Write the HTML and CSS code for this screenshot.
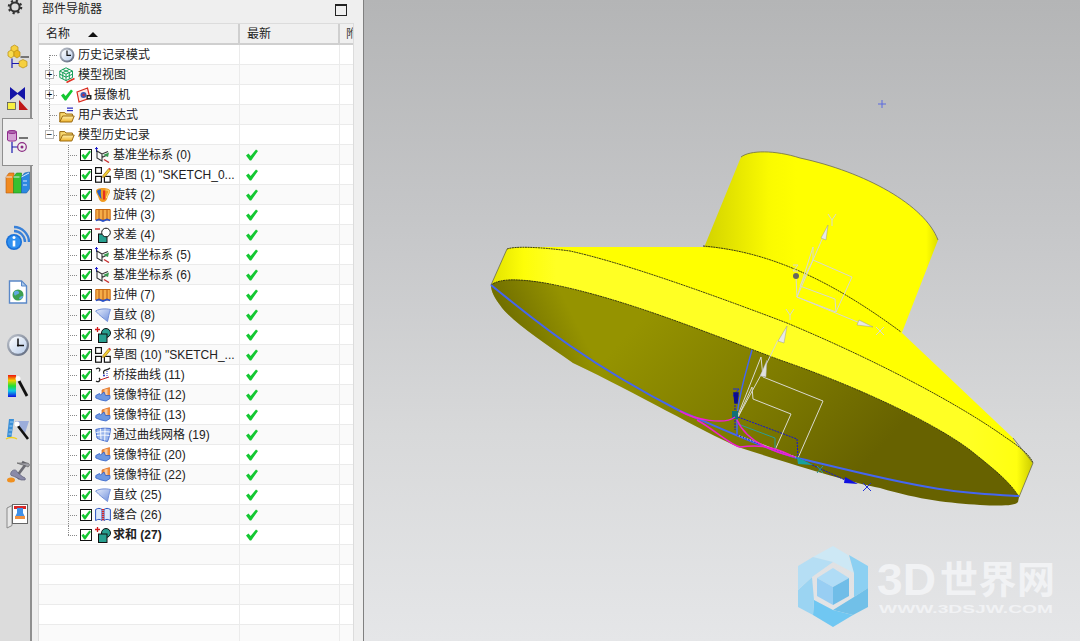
FILE: index.html
```html
<!DOCTYPE html>
<html lang="zh">
<head>
<meta charset="utf-8">
<title>部件导航器</title>
<link rel="stylesheet" href="styles.css">
</head>
<body>
<svg class="defs" width="0" height="0" aria-hidden="true">
  <defs>
    <linearGradient id="g-face" x1="0" y1="0" x2="1" y2="1"><stop offset="0" stop-color="#fff"/><stop offset="1" stop-color="#b9cdea"/></linearGradient>
    <linearGradient id="g-ring" x1="0" y1="0" x2="1" y2="1"><stop offset="0" stop-color="#c3c8d0"/><stop offset="1" stop-color="#59647a"/></linearGradient>
    <linearGradient id="g-fold" x1="0" y1="0" x2="0" y2="1"><stop offset="0" stop-color="#fff2b0"/><stop offset="1" stop-color="#eeb028"/></linearGradient>
    <linearGradient id="g-rain" x1="0" y1="0" x2="0" y2="1"><stop offset="0" stop-color="#f01010"/><stop offset=".25" stop-color="#f0d000"/><stop offset=".5" stop-color="#20e030"/><stop offset=".72" stop-color="#10c8e8"/><stop offset="1" stop-color="#1010e0"/></linearGradient>
    <linearGradient id="g-ruled" x1="0" y1="0" x2="1" y2="1"><stop offset="0" stop-color="#e6edfb"/><stop offset="1" stop-color="#6f8fdc"/></linearGradient>
    <symbol id="i-check" viewBox="0 0 12 12"><polygon points="0,6.5 2.5,4.5 4.6,7 10,0.5 12,2 5.2,11.5 3.8,11.5" fill="#14c832"/></symbol>
    <symbol id="i-box" viewBox="0 0 12 12"><rect x=".5" y=".5" width="11" height="11" fill="#fff" stroke="#111"/><polygon points="1.5,6.5 3.4,4.8 5,6.8 9.4,1.5 11,2.8 5.4,10.6 4.2,10.6" fill="#14c832"/></symbol>
    <symbol id="i-clock" viewBox="0 0 16 16"><circle cx="8" cy="8" r="7.5" fill="url(#g-ring)"/><circle cx="8" cy="8" r="5.6" fill="url(#g-face)"/><path d="M8 3.5V8.4H12" fill="none" stroke="#111" stroke-width="1.2"/></symbol>
    <symbol id="i-views" viewBox="0 0 16 16"><path d="M7 .8 13.5 4v6.5L7 13.6.8 10.5V4ZM.8 4 7 7.2 13.5 4M7 7.2v6.4M3.8 2.4 10.3 5.6v6.4M10.3 2.4 3.8 5.6v6.4M.8 7.2l6.2 3 6.500-3" fill="none" stroke="#19a05a" stroke-width="1"/><path d="M7.5 15.5 15.5 11.5" stroke="#e03020" stroke-width="1.6"/></symbol>
    <symbol id="i-camera" viewBox="0 0 16 16"><path d="M1 5 11.500 1 14 11 3 15Z" fill="#ffe6e0" stroke="#d8281c" stroke-width="1.2"/><circle cx="7.5" cy="8" r="3" fill="#3a58b8"/><circle cx="7.5" cy="8" r="1.2" fill="#c02840"/><rect x="10.500" y="8" width="5" height="4.500" fill="#222"/><rect x="11.900" y="9.400" width="2" height="1.600" fill="#fff"/></symbol>
    <symbol id="i-folder" viewBox="0 0 16 16"><path d="M.8 14V4.6h5l1.2 1.4h6.4V8" fill="#f8d870" stroke="#9a6a10"/><path d="M.8 14 3.6 8h11.6l-2.4 6Z" fill="url(#g-fold)" stroke="#9a6a10"/></symbol>
    <symbol id="i-exprs" viewBox="0 0 16 16"><path d="M.8 15V5.6h5l1.2 1.4h6.4v2" fill="#f8d870" stroke="#9a6a10"/><path d="M.8 15 3.6 9h11.6l-2.4 6Z" fill="url(#g-fold)" stroke="#9a6a10"/><path d="M8 1.2h6M8 3.6h6" stroke="#2a2ac0" stroke-width="1.2"/></symbol>
    <symbol id="i-datum" viewBox="0 0 16 16"><path d="M1.5 0v5M0 1.6h3" stroke="#1a1ac8"/><path d="M2 4v7l5 3V7ZM2 4l5 3 6-2.500M7 10.500l5-2.500" fill="none" stroke="#333" stroke-width="1.100"/><polygon points="8,8 14,5.500 13,10" fill="#3a9a50"/><path d="M9 12.500l5 3" stroke="#c83030" stroke-width="1.400"/></symbol>
    <symbol id="i-sketch" viewBox="0 0 16 16"><rect x=".6" y=".6" width="5.800" height="5.800" fill="#fff" stroke="#111" stroke-width="1.200"/><rect x=".6" y="9.400" width="5.800" height="5.800" fill="#fff" stroke="#111" stroke-width="1.200"/><rect x="9.400" y="9.400" width="5.800" height="5.800" fill="#fff" stroke="#111" stroke-width="1.200"/><path d="M8 8.400 13.500 1.800l1.800 1.400-5.400 6.600-2.300.6Z" fill="#f4d030" stroke="#a07010" stroke-width=".7"/><path d="M13.500 1.800l1.800 1.400.7-1-1.700-1.400Z" fill="#e03030"/></symbol>
    <symbol id="i-revolve" viewBox="0 0 16 16"><path d="M1 4C1 2 4 1 8 1s7 1 7 3c0 3-2 4-2.600 7-.4 2-2 4-4.400 4S4 13 3.600 11C3 8 1 7 1 4Z" fill="#f09a20"/><path d="M2 4.500C2 3 4 2.500 6 2.500 5.500 6 6 9 6.500 12 5 11 3 7 2 4.500Z" fill="#2060c8"/><path d="M8 3.500h2.200v9H8Z" fill="#e83020"/><path d="M10.500 3c1.600 0 3 .3 3.500 1-.5 2-2 4-2.600 7" fill="none" stroke="#ffe080"/></symbol>
    <symbol id="i-extrude" viewBox="0 0 16 16"><path d="M.8 2.500h14.400V13H.8Z" fill="#f5ad48" stroke="#c86a10"/><path d="M4 2.500v10.500M8 2.500v10.500M12 2.500v10.500" stroke="#b85a10"/><path d="M.8 13.500 4 12.500l4 1.500 4-1.500 3.200 1" fill="none" stroke="#2850c8" stroke-width="1.800"/></symbol>
    <symbol id="i-subtract" viewBox="0 0 16 16"><rect x="3.500" y="7" width="8.500" height="8.500" fill="#28a090" stroke="#111"/><circle cx="11" cy="5.500" r="4.300" fill="#fff" stroke="#111"/><path d="M0 2h5" stroke="#d01818" stroke-width="1.300"/></symbol>
    <symbol id="i-unite" viewBox="0 0 16 16"><circle cx="11" cy="6" r="4.500" fill="#28a090" stroke="#111"/><rect x="3.500" y="7" width="8.500" height="8.500" fill="#28a090" stroke="#111"/><path d="M0 2.500h5M2.500 0v5" stroke="#d01818" stroke-width="1.300"/></symbol>
    <symbol id="i-ruled" viewBox="0 0 16 16"><path d="M.6 4C5 1.500 11 1.500 15.500 2.500 14 6 13.500 10 12.500 14.500 9 11.500 5 9 .6 4Z" fill="url(#g-ruled)" stroke="#7390d8"/></symbol>
    <symbol id="i-bridge" viewBox="0 0 16 16"><path d="M1 2c3-2 5 0 3 2.500M1 14c3 2 5-1 3-3M15 1c-3 3-8 1-6 6" fill="none" stroke="#222" stroke-width="1.200"/><path d="M5 13 14 10" stroke="#d02020"/><circle cx="9" cy="8.500" r="1" fill="#2030c0"/><path d="M12 4v7" stroke="#2030c0" stroke-dasharray="1 1"/></symbol>
    <symbol id="i-mirror" viewBox="0 0 16 16"><path d="M7 3 14.500.6v9l-3 2.400-4.500-2Z" fill="#f09038" stroke="#e06820" stroke-width=".7"/><path d="M9.500 2.500 12.500 2v6l-3 1Z" fill="#f8c8a0"/><path d="M.8 8.500 4.500 6.500l1 1.500L9 5l1.500 3.500H15v3l-4 2.500-5-1-5.200-2Z" fill="#6f98e0" stroke="#3060c8" stroke-width=".8"/></symbol>
    <symbol id="i-mesh" viewBox="0 0 16 16"><path d="M.8 2.500C5 1 11 1 15.500 1.500 15 6 14.500 10 12.500 14.500 8 13.500 4 12.500 2 11Z" fill="#98b4ec" stroke="#4a70d0"/><path d="M1.200 5.500C6 4.500 11 4.500 15 5M1.700 8.500C6 8 10 8 14.500 8.500M5.500 1.600 6 12.500M10 1.300 9.700 13.500" fill="none" stroke="#fff" stroke-width=".9"/></symbol>
    <symbol id="i-sew" viewBox="0 0 16 16"><path d="M.6 2.500C3 1 5 1 7 2.500v11C5 12 3 12 .6 13.500ZM15.400 2.500C13 1 11 1 9 2.500v11c2-1.500 4-1.500 6.400 0Z" fill="#dce8fa" stroke="#2c54c0"/><path d="M8 2v12" stroke="#d82020" stroke-width="2.200" stroke-dasharray="1.200 .8"/></symbol>
  </defs>
</svg>

<aside class="side">
  <div class="slot"><svg class="sico gear" viewBox="0 0 16 16"><circle cx="8" cy="8" r="4.600" fill="none" stroke="#333" stroke-width="2"/><circle cx="8" cy="8" r="6.200" fill="none" stroke="#333" stroke-width="2.200" stroke-dasharray="2.200 2.670"/></svg></div>
  <div class="slot"><svg class="sico" viewBox="0 0 24 24"><path d="M5 4 8.500 2 12 4v4L8.500 10 5 8Z" fill="#f6d040" stroke="#b88c10" stroke-width=".7"/><path d="M2 9 5 7l3 2v4l-3 2-3-2Z" fill="#f8dc50" stroke="#b88c10" stroke-width=".7"/><path d="M8 9 11 7l3 2v4l-3 2-3-2Z" fill="#ecb820" stroke="#b88c10" stroke-width=".7"/><path d="M13 18.500 17 16.500l4 2v4.500l-4 2-4-2Z" fill="#f6d040" stroke="#b88c10" stroke-width=".7"/><path d="M14.500 14h8.500" stroke="#222" stroke-width="1.100"/><path d="M6 15.500V25M6 20.500h7" fill="none" stroke="#1a1ab0" stroke-width="1.200"/></svg></div>
  <div class="slot"><svg class="sico" viewBox="0 0 24 24"><path d="M4 1 11.500 7 19 1v13l-7.500-6L4 14Z" fill="#1414a8"/><rect x="1.500" y="16.500" width="8" height="7" fill="#f8f040" stroke="#555" stroke-width=".8"/><path d="M13 24V14l9 10Z" fill="#c01818"/></svg></div>
  <div class="slot slot-on"><svg class="sico" viewBox="0 0 24 24"><path d="M1.500 1C1.500-.5 10.500-.5 10.500 1V9c0 1.500-9 1.500-9 0Z" fill="#d4a0d4" stroke="#902c8c"/><ellipse cx="6" cy="1" rx="4.500" ry="1.500" fill="#b068b0" stroke="#902c8c"/><path d="M13 7h9" stroke="#222" stroke-width="1.200"/><path d="M6 11v11M6 16h6" stroke="#1a1ab0" stroke-width="1.200"/><circle cx="16" cy="16" r="4.300" fill="none" stroke="#8c2c84" stroke-width="1.200"/><circle cx="16" cy="16" r="1.500" fill="#8c2c84"/></svg></div>
  <div class="slot"><svg class="sico" viewBox="0 0 24 24"><path d="M0 5 3 1h5v20H0Z" fill="#f08a20" stroke="#b85a10" stroke-width=".6"/><path d="M7.500 5 10.500 1h5v20h-8Z" fill="#38c030" stroke="#1c8a20" stroke-width=".6"/><path d="M15.500 5 18.500 1 23.500 0v17l-3 4h-5Z" fill="#2c88e0" stroke="#1860a8" stroke-width=".6"/><path d="M0 5h6M7.500 5h6M15.500 5l7.500-4M17 9h4M17 13h4" stroke="#e8f0ff" stroke-width=".9" fill="none"/></svg></div>
  <div class="slot"><svg class="sico" viewBox="0 0 24 24"><circle cx="8" cy="16" r="8" fill="#1870d8"/><circle cx="8" cy="16" r="6.500" fill="#3090f0"/><circle cx="8" cy="11.500" r="1.500" fill="#fff"/><path d="M8 14.500v6" stroke="#fff" stroke-width="2.600"/><path d="M8 5c6 0 11 5 11 11M8 1c8 0 15 7 15 15" fill="none" stroke="#3880d8" stroke-width="2.400"/></svg></div>
  <div class="slot"><svg class="sico" viewBox="0 0 24 24"><path d="M3.500 1h12l5 5v17h-17Z" fill="#fff" stroke="#5a88c8" stroke-width="1.400"/><path d="M15.500 1v5h5Z" fill="#a8c8ec" stroke="#5a88c8"/><circle cx="12" cy="15" r="5.500" fill="#3ca050"/><path d="M8 12c2-2 4-1 5 0 1 2-2 2-3 3s-2 1-2-3ZM13 19c0-2 2-3 4-3 0 2-2 4-4 3Z" fill="#60a8e0"/></svg></div>
  <div class="slot"><svg class="sico" viewBox="0 0 24 24"><circle cx="12" cy="12" r="11" fill="url(#g-ring)"/><circle cx="12" cy="12" r="8.800" fill="url(#g-face)"/><path d="M12 5.500V12.500H18" fill="none" stroke="#111" stroke-width="1.500"/><circle cx="12" cy="12.500" r="1.100" fill="#111"/></svg></div>
  <div class="slot"><svg class="sico" viewBox="0 0 24 24"><rect x="2" y="0" width="8" height="22" fill="url(#g-rain)"/><path d="M13 6 21 21" stroke="#111" stroke-width="2.800"/><circle cx="12" cy="3.500" r="2.500" fill="#fff" opacity=".9"/></svg></div>
  <div class="slot"><svg class="sico" viewBox="0 0 24 24"><path d="M3 1h5L5.500 19H1Z" fill="#3c90d8"/><path d="M4 4h3M3.500 8h3M3 12h3M2.500 16h3" stroke="#a0d0f4" stroke-width="1"/><path d="M0 21c3-2 8-2 11 0" fill="none" stroke="#f0d020" stroke-width="1.500"/><path d="M9 3h14l-4 12" fill="#8098d8" opacity=".7"/><path d="M12 8 22 21" stroke="#111" stroke-width="2.600"/><circle cx="11" cy="6" r="2.500" fill="#fff"/></svg></div>
  <div class="slot"><svg class="sico" viewBox="0 0 24 24"><path d="M16 2 20 4 11 16l3 3" fill="none" stroke="#6c6c74" stroke-width="2.800"/><path d="M11 3h10c3 0 3 3 1 4-3-2-7-2-11-4Z" fill="#a0a0a8" stroke="#555" stroke-width=".6"/><path d="M6 11c2-2 5-1 5 1l6 5c2 0 3 2 2 3l-4 0c-3-2-6-3-8-4-3 0-3-3-1-5Z" fill="#8a8aa8" stroke="#50506c" stroke-width=".6"/><ellipse cx="5" cy="20" rx="4" ry="2.500" fill="#f09020"/></svg></div>
  <div class="slot"><svg class="sico role" viewBox="0 0 24 24"><path d="M1 5 6 2.500v20L1 25Z" fill="#e8e8e8" stroke="#8a8a8a"/><rect x="6.500" y="1.500" width="15" height="19" fill="#fff" stroke="#666"/><rect x="8" y="3" width="12" height="16" fill="#fff"/><rect x="8" y="3" width="12" height="3" fill="#d82828"/><path d="M11 5h6v5l2 4h-10l2-4Z" fill="#4090e8"/><rect x="9" y="13" width="10" height="3" fill="#f09040"/></svg></div>
</aside>

<section class="panel">
  <header class="ptitle">
    <span>部件导航器</span>
    <i class="maxbtn"></i>
  </header>
  <div class="table">
    <div class="thead">
      <div class="th th-name">名称<i class="sort"></i></div>
      <div class="th">最新</div>
      <div class="th th-clip">附</div>
    </div>
    <div class="row"><div class="name"><span class="tw r first"></span><svg class="ico"><use href="#i-clock"/></svg><span>历史记录模式</span></div><div class="cell"></div><div class="cell"></div></div>
    <div class="row"><div class="name"><span class="tw r"><b class="exp">+</b></span><svg class="ico"><use href="#i-views"/></svg><span>模型视图</span></div><div class="cell"></div><div class="cell"></div></div>
    <div class="row"><div class="name"><span class="tw r"><b class="exp">+</b></span><svg class="cam-check"><use href="#i-check"/></svg><svg class="ico cam"><use href="#i-camera"/></svg><span>摄像机</span></div><div class="cell"></div><div class="cell"></div></div>
    <div class="row"><div class="name"><span class="tw r"></span><svg class="ico"><use href="#i-exprs"/></svg><span>用户表达式</span></div><div class="cell"></div><div class="cell"></div></div>
    <div class="row"><div class="name"><span class="tw r last"><b class="exp">−</b></span><svg class="ico"><use href="#i-folder"/></svg><span>模型历史记录</span></div><div class="cell"></div><div class="cell"></div></div>
    <div class="row"><div class="name"><span class="tw c"></span><svg class="box"><use href="#i-box"/></svg><svg class="ico"><use href="#i-datum"/></svg><span>基准坐标系 (0)</span></div><div class="cell"><svg class="ok"><use href="#i-check"/></svg></div><div class="cell"></div></div>
    <div class="row"><div class="name"><span class="tw c"></span><svg class="box"><use href="#i-box"/></svg><svg class="ico"><use href="#i-sketch"/></svg><span>草图 (1) "SKETCH_0...</span></div><div class="cell"><svg class="ok"><use href="#i-check"/></svg></div><div class="cell"></div></div>
    <div class="row"><div class="name"><span class="tw c"></span><svg class="box"><use href="#i-box"/></svg><svg class="ico"><use href="#i-revolve"/></svg><span>旋转 (2)</span></div><div class="cell"><svg class="ok"><use href="#i-check"/></svg></div><div class="cell"></div></div>
    <div class="row"><div class="name"><span class="tw c"></span><svg class="box"><use href="#i-box"/></svg><svg class="ico"><use href="#i-extrude"/></svg><span>拉伸 (3)</span></div><div class="cell"><svg class="ok"><use href="#i-check"/></svg></div><div class="cell"></div></div>
    <div class="row"><div class="name"><span class="tw c"></span><svg class="box"><use href="#i-box"/></svg><svg class="ico"><use href="#i-subtract"/></svg><span>求差 (4)</span></div><div class="cell"><svg class="ok"><use href="#i-check"/></svg></div><div class="cell"></div></div>
    <div class="row"><div class="name"><span class="tw c"></span><svg class="box"><use href="#i-box"/></svg><svg class="ico"><use href="#i-datum"/></svg><span>基准坐标系 (5)</span></div><div class="cell"><svg class="ok"><use href="#i-check"/></svg></div><div class="cell"></div></div>
    <div class="row"><div class="name"><span class="tw c"></span><svg class="box"><use href="#i-box"/></svg><svg class="ico"><use href="#i-datum"/></svg><span>基准坐标系 (6)</span></div><div class="cell"><svg class="ok"><use href="#i-check"/></svg></div><div class="cell"></div></div>
    <div class="row"><div class="name"><span class="tw c"></span><svg class="box"><use href="#i-box"/></svg><svg class="ico"><use href="#i-extrude"/></svg><span>拉伸 (7)</span></div><div class="cell"><svg class="ok"><use href="#i-check"/></svg></div><div class="cell"></div></div>
    <div class="row"><div class="name"><span class="tw c"></span><svg class="box"><use href="#i-box"/></svg><svg class="ico"><use href="#i-ruled"/></svg><span>直纹 (8)</span></div><div class="cell"><svg class="ok"><use href="#i-check"/></svg></div><div class="cell"></div></div>
    <div class="row"><div class="name"><span class="tw c"></span><svg class="box"><use href="#i-box"/></svg><svg class="ico"><use href="#i-unite"/></svg><span>求和 (9)</span></div><div class="cell"><svg class="ok"><use href="#i-check"/></svg></div><div class="cell"></div></div>
    <div class="row"><div class="name"><span class="tw c"></span><svg class="box"><use href="#i-box"/></svg><svg class="ico"><use href="#i-sketch"/></svg><span>草图 (10) "SKETCH_...</span></div><div class="cell"><svg class="ok"><use href="#i-check"/></svg></div><div class="cell"></div></div>
    <div class="row"><div class="name"><span class="tw c"></span><svg class="box"><use href="#i-box"/></svg><svg class="ico"><use href="#i-bridge"/></svg><span>桥接曲线 (11)</span></div><div class="cell"><svg class="ok"><use href="#i-check"/></svg></div><div class="cell"></div></div>
    <div class="row"><div class="name"><span class="tw c"></span><svg class="box"><use href="#i-box"/></svg><svg class="ico"><use href="#i-mirror"/></svg><span>镜像特征 (12)</span></div><div class="cell"><svg class="ok"><use href="#i-check"/></svg></div><div class="cell"></div></div>
    <div class="row"><div class="name"><span class="tw c"></span><svg class="box"><use href="#i-box"/></svg><svg class="ico"><use href="#i-mirror"/></svg><span>镜像特征 (13)</span></div><div class="cell"><svg class="ok"><use href="#i-check"/></svg></div><div class="cell"></div></div>
    <div class="row"><div class="name"><span class="tw c"></span><svg class="box"><use href="#i-box"/></svg><svg class="ico"><use href="#i-mesh"/></svg><span>通过曲线网格 (19)</span></div><div class="cell"><svg class="ok"><use href="#i-check"/></svg></div><div class="cell"></div></div>
    <div class="row"><div class="name"><span class="tw c"></span><svg class="box"><use href="#i-box"/></svg><svg class="ico"><use href="#i-mirror"/></svg><span>镜像特征 (20)</span></div><div class="cell"><svg class="ok"><use href="#i-check"/></svg></div><div class="cell"></div></div>
    <div class="row"><div class="name"><span class="tw c"></span><svg class="box"><use href="#i-box"/></svg><svg class="ico"><use href="#i-mirror"/></svg><span>镜像特征 (22)</span></div><div class="cell"><svg class="ok"><use href="#i-check"/></svg></div><div class="cell"></div></div>
    <div class="row"><div class="name"><span class="tw c"></span><svg class="box"><use href="#i-box"/></svg><svg class="ico"><use href="#i-ruled"/></svg><span>直纹 (25)</span></div><div class="cell"><svg class="ok"><use href="#i-check"/></svg></div><div class="cell"></div></div>
    <div class="row"><div class="name"><span class="tw c"></span><svg class="box"><use href="#i-box"/></svg><svg class="ico"><use href="#i-sew"/></svg><span>缝合 (26)</span></div><div class="cell"><svg class="ok"><use href="#i-check"/></svg></div><div class="cell"></div></div>
    <div class="row"><div class="name"><span class="tw c last"></span><svg class="box"><use href="#i-box"/></svg><svg class="ico"><use href="#i-unite"/></svg><span class="cur">求和 (27)</span></div><div class="cell"><svg class="ok"><use href="#i-check"/></svg></div><div class="cell"></div></div>
    <div class="row"><div class="name"></div><div class="cell"></div><div class="cell"></div></div>
    <div class="row"><div class="name"></div><div class="cell"></div><div class="cell"></div></div>
    <div class="row"><div class="name"></div><div class="cell"></div><div class="cell"></div></div>
    <div class="row"><div class="name"></div><div class="cell"></div><div class="cell"></div></div>
    <div class="row"><div class="name"></div><div class="cell"></div><div class="cell"></div></div>
  </div>
</section>

<main class="view">
  <svg class="scene" viewBox="364 0 716 641" width="716" height="641">
    <defs>
      <linearGradient id="neck" gradientUnits="userSpaceOnUse" x1="703" y1="240" x2="938" y2="240"><stop offset="0" stop-color="#d2d200"/><stop offset=".28" stop-color="#fafa00"/><stop offset=".4" stop-color="#ffff00"/><stop offset=".95" stop-color="#ffff00"/><stop offset="1" stop-color="#dede00"/></linearGradient>
      <linearGradient id="band" gradientUnits="userSpaceOnUse" x1="491" y1="300" x2="1033" y2="300"><stop offset="0" stop-color="#e2e200"/><stop offset=".06" stop-color="#fdfd08"/><stop offset=".12" stop-color="#ffff24"/><stop offset=".88" stop-color="#ffff24"/><stop offset=".97" stop-color="#ffff10"/><stop offset="1" stop-color="#cccc00"/></linearGradient>
      <linearGradient id="under" gradientUnits="userSpaceOnUse" x1="660" y1="300" x2="850" y2="480"><stop offset="0" stop-color="#959300"/><stop offset=".55" stop-color="#7d7a00"/><stop offset="1" stop-color="#676200"/></linearGradient>
      <linearGradient id="underl" gradientUnits="userSpaceOnUse" x1="500" y1="320" x2="560" y2="290"><stop offset="0" stop-color="#5c5a00" stop-opacity=".7"/><stop offset="1" stop-color="#5c5a00" stop-opacity="0"/></linearGradient>
    </defs>

    <path d="M741 157C750 150 775 150 800 158C865 172 925 205 938 240L901 335L703 250Z" fill="url(#neck)"/>
    <path d="M741 157C750 150 775 150 800 158C865 172 925 205 938 240" class="edge-soft"/>
    <path d="M520 247L703 247C760 250 830 275 901 332L1013 438L1030 470L700 340L507 262Z" fill="#ffff00"/>
    <path d="M507 249C515 246 540 247 570 251C620 262 700 290 787 323C880 362 960 405 1005 437C1020 447 1030 455 1033 463L1019 497L900 440L700 335L491 285Z" fill="url(#band)"/>
    <path id="under-shape" d="M491 285C500 278 520 279 545 283C620 297 700 330 780 360C850 384 930 420 970 450C995 470 1010 482 1019 497L1018 502C1015 506 1000 506 980 505C950 503 920 500 880 488C850 482 800 467 738 447C700 430 640 395 573 363C540 340 510 320 500 305C495 298 491 292 491 285Z" fill="url(#under)"/>
    <path d="M491 285C500 278 520 279 545 283C620 297 700 330 780 360C850 384 930 420 970 450C995 470 1010 482 1019 497L1018 502C1015 506 1000 506 980 505C950 503 920 500 880 488C850 482 800 467 738 447C700 430 640 395 573 363C540 340 510 320 500 305C495 298 491 292 491 285Z" fill="url(#underl)"/>

    <path d="M703 246C760 251 820 272 901 332" class="edge"/>
    <path d="M507 249C515 246 540 247 570 251C620 262 700 290 787 323C880 362 960 405 1005 437C1020 447 1030 455 1033 463" class="edge"/>
    <path d="M491 285C500 278 520 279 545 283C620 297 700 330 780 360C850 384 930 420 970 450C995 470 1010 482 1019 497" class="edge"/>
    <path d="M507 249 491 285" class="edge-soft"/>
    <path d="M1033 463 1019 497" class="edge-soft"/>
    <path d="M1013 438 1033 463" class="edge-soft"/>

    <path d="M491 285C540 325 590 365 680 411C720 428 760 447 797 458C850 470 900 484 947 490C975 494 1000 495 1019 496" class="blue-line"/>

    <g class="dim">
      <path d="M797 297 823 237M797 297 860 323M796 277 797 297"/>
      <path d="M813 247 797 297M813 247 813 260M800 286 813 260 852 277 836 312 797 297M800 286 835 299 836 312"/>
      <path d="M828 214 832 220 836 214M832 220 832 226M793 265 798 265 793 271 798 271M876 327 884 335M884 327 876 335"/>
      <path d="M786 309 790 315 794 309M790 315 790 320M762 373 778 340M738 417 762 373"/>
      <path d="M761 357 763 377 823 401 798 458 737 435M761 357 738 415M752 387 753 399 791 414 775 450M752 387 738 417"/>
    </g>
    <polygon points="828,225 821,238 826,240" fill="#e8e8e8" stroke="#888" stroke-width=".4"/>
    <polygon points="873,327 859,320 857,325" fill="#e8e8e8" stroke="#888" stroke-width=".4"/>
    <polygon points="787,326 778,341 784,343" fill="#e8e8e8" stroke="#888" stroke-width=".4"/>
    <polygon points="767,360 760,376 766,377" fill="#e0e0e0" stroke="#999" stroke-width=".4"/>
    <circle cx="796" cy="276" r="3" fill="#67675f"/>

    <path d="M752 350C745 375 740 390 737 415L737 435" class="blue-thin"/>
    <path d="M738 417 797 439 798 458M737 435 777 451 797 458 845 480" class="blue-dots"/>
    <polygon points="845,477 858,484 844,483" fill="#1010e0"/>
    <path d="M863 483 871 491M871 483 863 491M733 389 739 389 733 396 739 396" class="blue-mark"/>
    <polygon points="734,393 738,393 737,403 735,403" fill="#0c0c90" stroke="#0c0c90" stroke-width="1.500"/>
    <path d="M735 405 735 430" class="blue-dots"/>
    <path d="M738 424 775 438 775 450" class="teal"/>
    <path d="M817 466 823 473M823 466 817 473" class="teal"/>
    <polygon points="797,457 813,465 798,464" fill="#18a0a0"/>
    <rect x="732" y="411" width="6" height="8" fill="#127078"/>
    <path d="M680 411C695 420 725 425 735 417" class="magenta"/>
    <path d="M697 420C715 430 730 445 740 447C755 445 770 445 790 455" class="magenta"/>
    <path d="M737 420C745 438 765 450 795 457" class="magenta"/>

    <path d="M882 100v8M878 104h8" stroke="#5a6ae0" stroke-width="1" fill="none"/>

    <g class="wm-logo">
      <polygon points="813,557 833,546 848,555 854,573 833,562" fill="#cde8f5"/>
      <polygon points="849,555 868,566 868,588 854,597 854,573" fill="#8cd0f2"/>
      <polygon points="868,588 868,607 853,615 833,610 854,597" fill="#71c0e8"/>
      <polygon points="853,615 833,627 813,615 814,600 833,610" fill="#70c7f2"/>
      <polygon points="813,615 798,607 798,590 812,577 814,600" fill="#9bd4f2"/>
      <polygon points="798,590 798,566 813,557 833,562 812,577" fill="#b5def4"/>
      <polygon points="833,568 849,578 833,587 817,578" fill="#b0dcf6"/>
      <polygon points="817,578 833,587 833,605 817,596" fill="#98cef3"/>
      <polygon points="849,578 833,587 833,605 849,596" fill="#70bde8"/>
    </g>
    <text class="wm-3d" x="877" y="595" textLength="59" lengthAdjust="spacingAndGlyphs">3D</text>
    <text class="wm-cn" x="940" y="593" textLength="115" lengthAdjust="spacing">世界网</text>
    <text class="wm-url" x="879" y="613" textLength="174" lengthAdjust="spacingAndGlyphs">WWW.3DSJW.COM</text>
  </svg>
</main>
</body>
</html>
```
FILE: styles.css
```css
* { box-sizing: border-box; }
html, body { margin: 0; height: 100%; }
body {
  display: flex;
  width: 1080px;
  height: 641px;
  overflow: hidden;
  font: 12px/20px "Liberation Sans", "Noto Sans CJK SC", sans-serif;
  color: #222;
  background: #efefef;
}
.defs { position: absolute; }

/* left icon rail */
.side {
  flex: 0 0 32px;
  display: grid;
  grid-template-rows: 43px 43px 45px 41px 54px 54px 53px 42px 43px 42px 42px 1fr;
  background: #dcdcdc;
  border-right: 2px solid #8f8f8f;
  position: relative;
  z-index: 1;
}
.slot { position: relative; padding-left: 6px; }
.sico { display: block; width: 24px; height: 24px; position: relative; overflow: visible; }
.gear { width: 16px; height: 16px; margin: -1px 0 0 1px; }
.role { margin-top: 1px; }
.slot-on::before {
  content: "";
  position: absolute;
  left: 2px;
  top: -13px;
  width: 30px;
  height: 46px;
  background: #efefef;
  border: 1px solid #8f8f8f;
  border-right: 0;
}

/* navigator panel */
.panel {
  flex: 0 0 332px;
  padding: 0 10px 0 6px;
  background: #efefef;
  border-right: 1px solid #808080;
  overflow: hidden;
}
.ptitle {
  height: 23px;
  padding: 0 0 0 4px;
  display: flex;
  align-items: flex-start;
  justify-content: space-between;
  line-height: 18px;
}
.maxbtn {
  width: 12px;
  height: 12px;
  margin: 4px 6px 0 0;
  border: 1px solid #222;
  border-top-width: 2px;
}
.table {
  width: 315px;
  height: 640px;
  border: 1px solid #dcdcdc;
  border-width: 1px 0 0 1px;
  box-shadow: 1px 0 0 #dcdcdc;
  background: #fff;
}
.thead, .row { display: grid; grid-template-columns: 201px 100px 13px; }
.thead { height: 21px; background: #f0f0f0; border-bottom: 2px solid #cfcfcf; }
.th { padding: 0 0 0 7px; border-right: 2px solid #cfcfcf; line-height: 20px; white-space: nowrap; overflow: hidden; }
.th-name { padding-left: 7px; display: flex; }
.th-clip { border: 0; padding-left: 6px; color: #444; }
.sort {
  width: 0; height: 0;
  margin: 8px 0 0 18px;
  border: 5px solid transparent;
  border-top: 0;
  border-bottom: 5px solid #111;
}
.row { height: 20px; border-bottom: 1px solid #ebebeb; background: #fff; }
.row:nth-child(odd) { background: #fafafa; }
.name, .cell { border-right: 1px solid #ebebeb; min-width: 0; }
.name { display: flex; align-items: center; white-space: nowrap; overflow: hidden; }
.cell { display: flex; align-items: center; padding-left: 6px; }
.cell:last-child { border-right: 0; }

.tw { position: relative; flex: none; height: 100%; display: block; }
.tw.r { width: 20px; }
.tw.c { width: 41px; }
.tw::before, .tw::after { content: ""; position: absolute; border: 0 dotted #8a8a8a; }
.tw::before { top: 0; bottom: 0; border-left-width: 1px; }
.tw::after { top: 10px; height: 0; border-top-width: 1px; }
.tw.r::before { left: 10px; }
.tw.r::after { left: 10px; width: 8px; }
.tw.c::before { left: 29px; }
.tw.c::after { left: 29px; width: 9px; }
.tw.first::before { top: 10px; }
.tw.last::before { bottom: 9px; }
.exp {
  position: absolute;
  z-index: 1;
  left: 6px;
  top: 5px;
  width: 9px;
  height: 9px;
  border: 1px solid #b5b5b5;
  background: #fff;
  color: #000;
  font: 400 10px/7px "Liberation Sans", sans-serif;
  text-align: center;
}
.ico { flex: none; width: 16px; height: 16px; margin-right: 3px; }
.box { flex: none; width: 12px; height: 12px; margin-right: 3px; }
.row .box + .ico { margin-right: 2px; }
.cam-check { flex: none; width: 12px; height: 12px; margin: 0 3px 0 2px; }
.cam { margin-right: 2px; }
.ok { flex: none; width: 12px; height: 12px; }
.cur { font-weight: 700; }

/* graphics window */
.view {
  flex: 1 1 auto;
  min-width: 0;
  background: linear-gradient(#b4b5b6 0, #c6c7c9 36%, #d8d9da 68%, #e5e6e8 100%);
  overflow: hidden;
}
.scene { display: block; }
.edge { fill: none; stroke: #2a2a10; stroke-width: .9; stroke-dasharray: 2 .6; }
.edge-soft { fill: none; stroke: #6a6a50; stroke-width: .8; }
.blue-line { fill: none; stroke: #4566f0; stroke-width: 2; }
.blue-thin { fill: none; stroke: #4566f0; stroke-width: 1.500; }
.blue-dots { fill: none; stroke: #1212d8; stroke-width: 1; stroke-dasharray: 2 1; }
.blue-mark { fill: none; stroke: #2030d8; stroke-width: 1; }
.dim { fill: none; stroke: #d9d9d0; stroke-width: 1; }
.teal { fill: none; stroke: #2a9c98; stroke-width: 1; }
.magenta { fill: none; stroke: #f020d0; stroke-width: 1.500; }
.wm-3d, .wm-cn, .wm-url { fill: #f1f2f4; }
.wm-3d { font: 700 45px "Liberation Sans", sans-serif; }
.wm-cn { font: 700 38px "Noto Sans CJK SC", sans-serif; }
.wm-url { font: 700 10px "Liberation Sans", sans-serif; }
```
